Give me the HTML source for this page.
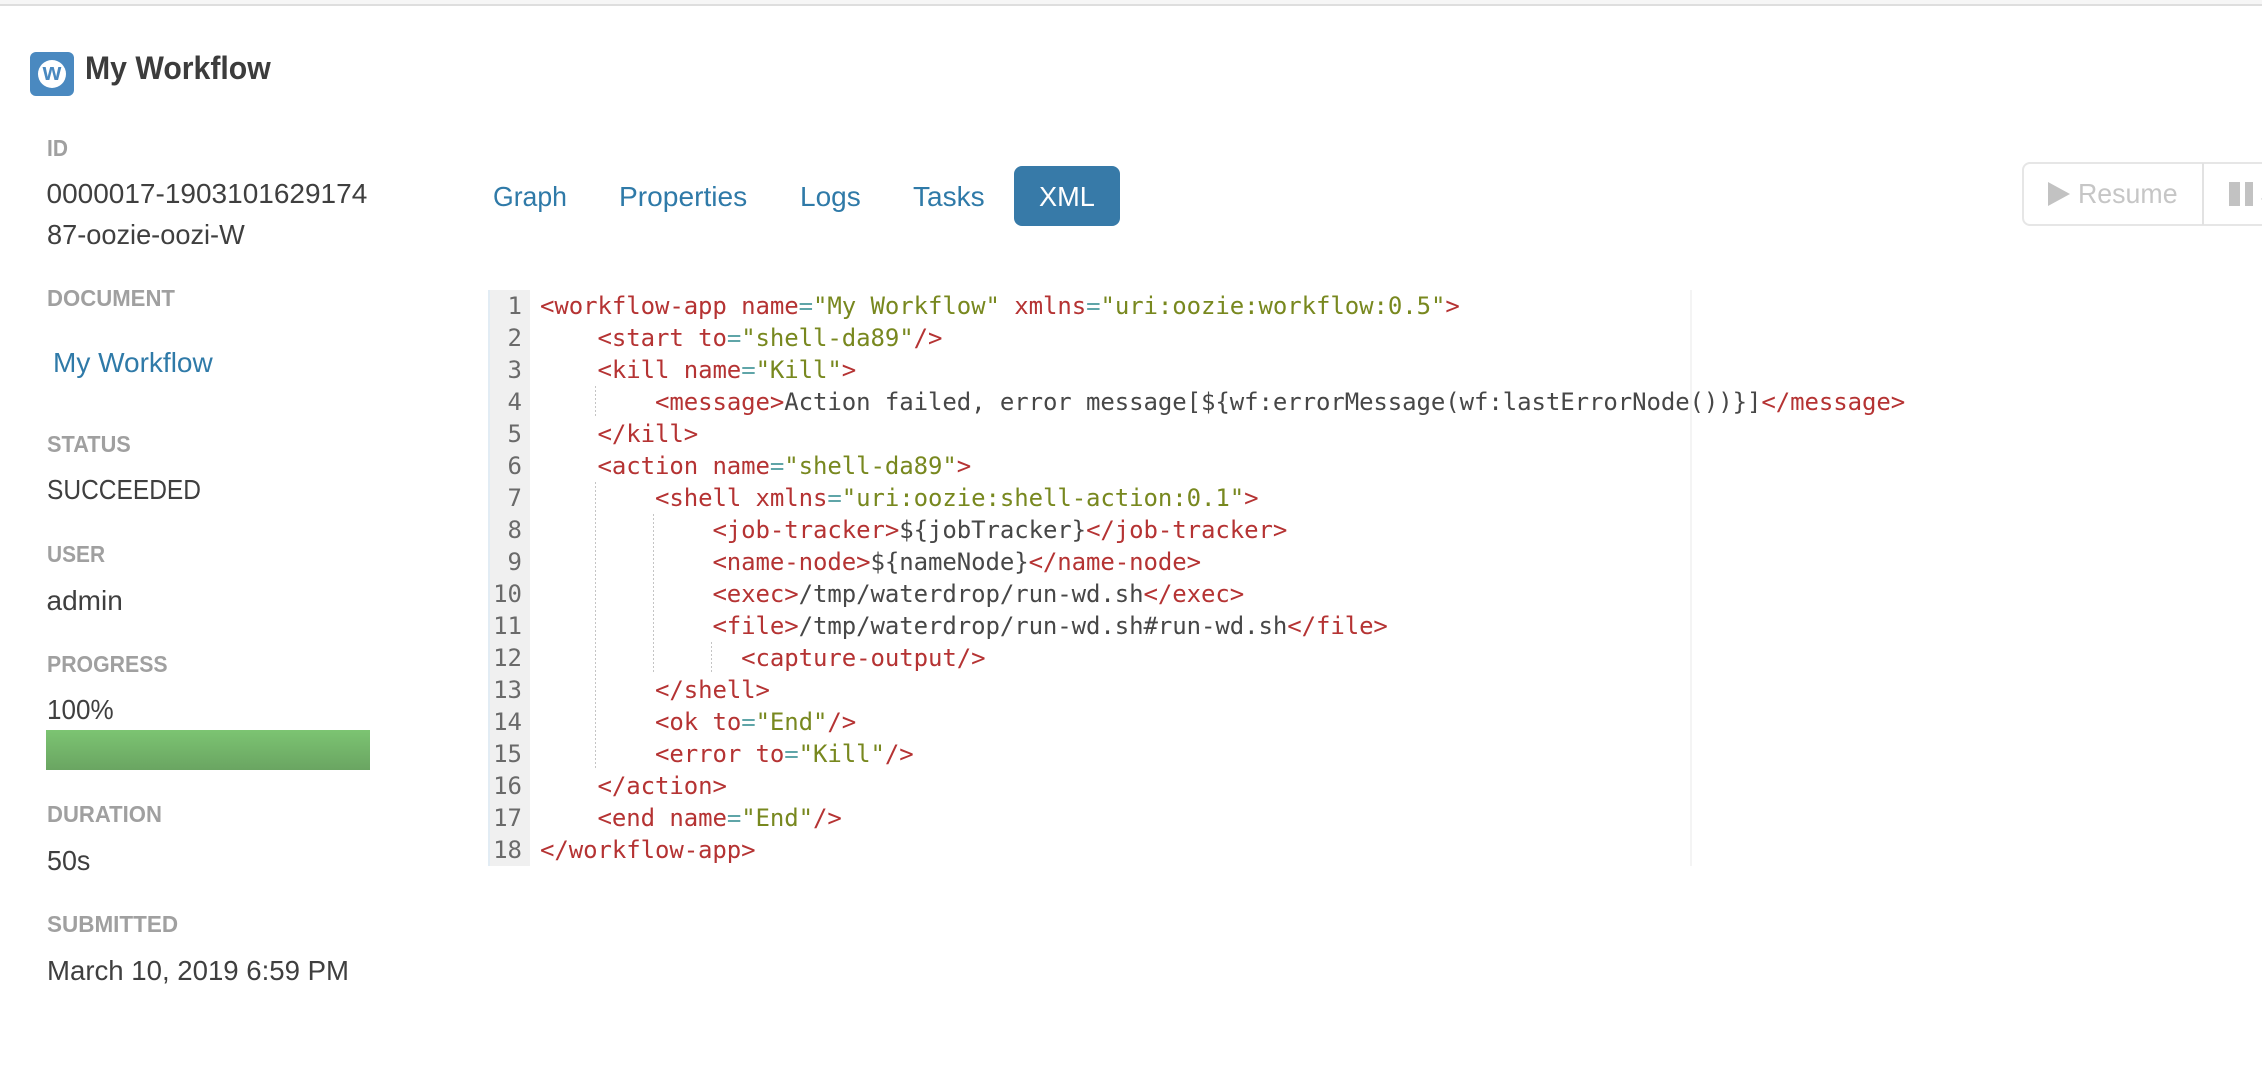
<!DOCTYPE html>
<html><head><meta charset="utf-8"><style>
html,body{margin:0;padding:0;background:#fff;width:2262px;height:1082px;overflow:hidden}
body{position:relative;font-family:"Liberation Sans",sans-serif;color:#3f3f3f}
.a{position:absolute;white-space:pre;transform-origin:0 50%}
.l{font-size:23px;line-height:30px;font-weight:700;color:#a0a0a0;left:46.5px}
.v{font-size:28px;line-height:40px;left:46.5px;color:#3f3f3f}
.tab{font-size:28px;line-height:40px;top:177px;color:#2f7aa8}
#code,#nums{position:absolute;top:290px;font:24px/32px "DejaVu Sans Mono",monospace;white-space:pre}
#code{left:540px;color:#474747;letter-spacing:-.08px}
#nums{left:489px;width:33px;text-align:right;color:#6a6a6a}
i{font-style:normal}
.t{color:#b53333}.s{color:#78881f}.o{color:#5fa5a8}
.g{position:absolute;width:1px;background:repeating-linear-gradient(to bottom,#c4c4c4 0 2px,transparent 2px 4px)}
</style></head><body>
<div style="position:absolute;left:0;top:0;width:2262px;height:4px;background:#f6f6f6"></div>
<div style="position:absolute;left:0;top:4px;width:2262px;height:2px;background:#dedede"></div>

<svg style="position:absolute;left:30px;top:52px" width="44" height="44" viewBox="0 0 44 44">
<rect width="44" height="44" rx="6" fill="#4a89c0"/><circle cx="22" cy="22" r="14" fill="#fff"/>
<text x="22" y="28" text-anchor="middle" font-family="Liberation Sans" font-weight="700" font-size="24" fill="#4a89c0">w</text>
</svg>
<div class="a" style="left:85px;top:48px;font-size:32px;line-height:40px;font-weight:700;color:#3c3c3c;transform:scaleX(.944)">My Workflow</div>

<div class="a l" style="top:133px;transform:scaleX(.91)">ID</div>
<div class="a v" style="top:174px">0000017-1903101629174</div>
<div class="a v" style="top:215px;transform:scaleX(.97)">87-oozie-oozi-W</div>
<div class="a l" style="top:283px;transform:scaleX(.963)">DOCUMENT</div>
<div class="a v" style="left:53px;top:343px;color:#2f7aa8">My Workflow</div>
<div class="a l" style="top:429px;transform:scaleX(.946)">STATUS</div>
<div class="a v" style="top:470px;transform:scaleX(.876)">SUCCEEDED</div>
<div class="a l" style="top:539px;transform:scaleX(.908)">USER</div>
<div class="a v" style="top:581px">admin</div>
<div class="a l" style="top:649px;transform:scaleX(.925)">PROGRESS</div>
<div class="a v" style="top:690px;transform:scaleX(.93)">100%</div>
<div style="position:absolute;left:46px;top:730px;width:324px;height:40px;background:linear-gradient(#7cc472,#6aa562)"></div>
<div class="a l" style="top:799px;transform:scaleX(.96)">DURATION</div>
<div class="a v" style="top:841px;transform:scaleX(.96)">50s</div>
<div class="a l" style="top:909px;transform:scaleX(.977)">SUBMITTED</div>
<div class="a v" style="top:951px;transform:scaleX(.985)">March 10, 2019 6:59 PM</div>

<div class="a tab" style="left:493px;transform:scaleX(.95)">Graph</div>
<div class="a tab" style="left:619px;transform:scaleX(1.005)">Properties</div>
<div class="a tab" style="left:800px">Logs</div>
<div class="a tab" style="left:913px">Tasks</div>
<div style="position:absolute;left:1014px;top:166px;width:106px;height:60px;border-radius:8px;background:#377aa8"></div>
<div class="a tab" style="left:1039px;color:#fff;transform:scaleX(.97)">XML</div>

<div style="position:absolute;left:2022px;top:162px;width:260px;height:60px;border:2px solid #e6e6e6;border-radius:8px"></div>
<div style="position:absolute;left:2202px;top:163px;width:2px;height:62px;background:#e2e2e2"></div>
<svg style="position:absolute;left:2048px;top:182px" width="24" height="24"><path d="M0 0L22 12L0 24Z" fill="#c2c2c2"/></svg>
<div class="a" style="left:2078px;top:174px;font-size:28px;line-height:40px;color:#c6c6c6;transform:scaleX(.955)">Resume</div>
<div style="position:absolute;left:2229px;top:182px;width:11px;height:24px;background:#c2c2c2"></div>
<div style="position:absolute;left:2245px;top:182px;width:8px;height:24px;background:#c2c2c2"></div>
<div class="a" style="left:2260px;top:174px;font-size:28px;line-height:40px;color:#c6c6c6">Suspend</div>

<div style="position:absolute;left:488px;top:290px;width:40px;height:576px;background:#f0f0f0;border-left:2px solid #e2ecf4"></div>
<div style="position:absolute;left:1690px;top:290px;width:2px;height:576px;background:#f4f4f4"></div>
<div class="g" style="left:595px;top:386px;height:32px"></div>
<div class="g" style="left:595px;top:482px;height:288px"></div>
<div class="g" style="left:653px;top:514px;height:160px"></div>
<div class="g" style="left:711px;top:642px;height:32px"></div>

<div id="nums">1
2
3
4
5
6
7
8
9
10
11
12
13
14
15
16
17
18</div>
<div id="code"><i class="t">&lt;workflow-app name</i><i class="o">=</i><i class="s">"My Workflow"</i> <i class="t">xmlns</i><i class="o">=</i><i class="s">"uri:oozie:workflow:0.5"</i><i class="t">&gt;</i>
    <i class="t">&lt;start to</i><i class="o">=</i><i class="s">"shell-da89"</i><i class="t">/&gt;</i>
    <i class="t">&lt;kill name</i><i class="o">=</i><i class="s">"Kill"</i><i class="t">&gt;</i>
        <i class="t">&lt;message&gt;</i>Action failed, error message[${wf:errorMessage(wf:lastErrorNode())}]<i class="t">&lt;/message&gt;</i>
    <i class="t">&lt;/kill&gt;</i>
    <i class="t">&lt;action name</i><i class="o">=</i><i class="s">"shell-da89"</i><i class="t">&gt;</i>
        <i class="t">&lt;shell xmlns</i><i class="o">=</i><i class="s">"uri:oozie:shell-action:0.1"</i><i class="t">&gt;</i>
            <i class="t">&lt;job-tracker&gt;</i>${jobTracker}<i class="t">&lt;/job-tracker&gt;</i>
            <i class="t">&lt;name-node&gt;</i>${nameNode}<i class="t">&lt;/name-node&gt;</i>
            <i class="t">&lt;exec&gt;</i>/tmp/waterdrop/run-wd.sh<i class="t">&lt;/exec&gt;</i>
            <i class="t">&lt;file&gt;</i>/tmp/waterdrop/run-wd.sh#run-wd.sh<i class="t">&lt;/file&gt;</i>
              <i class="t">&lt;capture-output/&gt;</i>
        <i class="t">&lt;/shell&gt;</i>
        <i class="t">&lt;ok to</i><i class="o">=</i><i class="s">"End"</i><i class="t">/&gt;</i>
        <i class="t">&lt;error to</i><i class="o">=</i><i class="s">"Kill"</i><i class="t">/&gt;</i>
    <i class="t">&lt;/action&gt;</i>
    <i class="t">&lt;end name</i><i class="o">=</i><i class="s">"End"</i><i class="t">/&gt;</i>
<i class="t">&lt;/workflow-app&gt;</i></div>
</body></html>
